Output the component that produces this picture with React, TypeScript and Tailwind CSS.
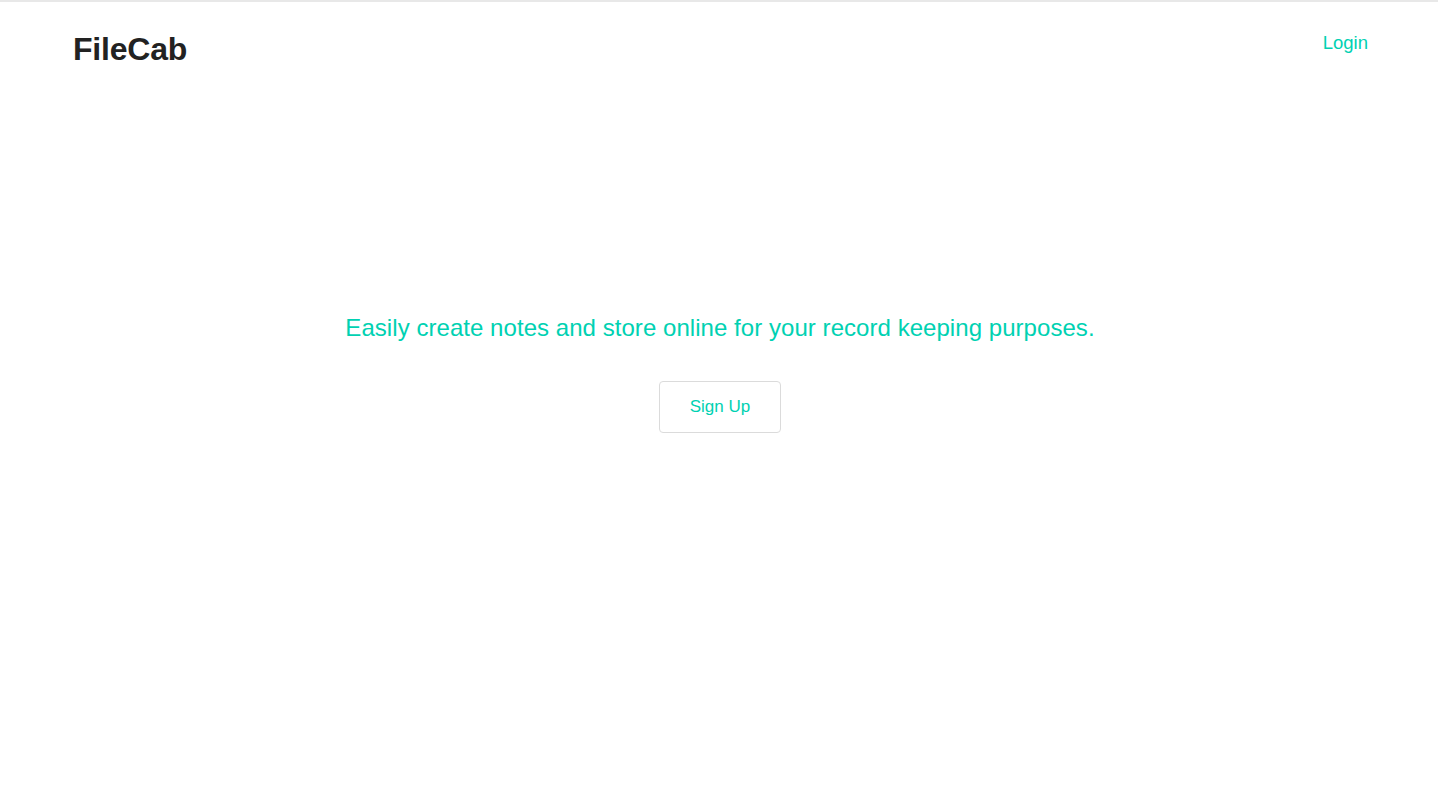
import React from "react";

export default function App() {
  return (
    <div
      className="min-h-[799px] bg-white border-t-2 border-[#e8e8e8]"
      style={{ fontFamily: '"Liberation Sans", Arial, sans-serif' }}
    >
      <header className="flex items-start justify-between pl-[73px] pr-[70px] pt-[28px]">
        <h1 className="text-[32px] leading-[38px] font-bold text-[#222] tracking-[-0.2px]">FileCab</h1>
        <a className="text-[18.5px] leading-[24px] text-[#00d1b2] mt-[1px]" href="#">
          Login
        </a>
      </header>
      <main className="flex flex-col items-center pt-[245px]">
        <p className="text-[24px] leading-[30px] text-[#00d1b2] tracking-[0.05px] ml-[2px]">
          Easily create notes and store online for your record keeping purposes.
        </p>
        <button className="mt-[38px] ml-[2px] w-[122px] h-[52px] rounded-[4px] border border-[#dbdbdb] bg-white text-[17px] text-[#00d1b2]">
          Sign Up
        </button>
      </main>
    </div>
  );
}
